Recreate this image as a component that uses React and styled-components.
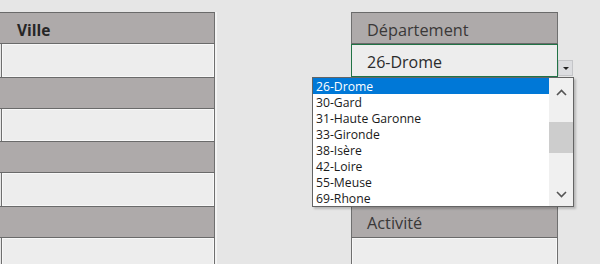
import React from "react";
import styled, { createGlobalStyle, css } from "styled-components";

const departements = [
  "26-Drome",
  "30-Gard",
  "31-Haute Garonne",
  "33-Gironde",
  "38-Isère",
  "42-Loire",
  "55-Meuse",
  "69-Rhone",
];

const leftRows = ["head", "body", "blank", "body", "blank", "body", "blank", "body"];

const App = () => {
  return (
    <>
      <GlobalStyle />
      <Sheet>
        <LeftTable>
          {leftRows.map((kind, i) => (
            <Cell key={i} $kind={kind} $edge>
              {i === 0 && <Bold>Ville</Bold>}
            </Cell>
          ))}
        </LeftTable>

        <RightTable>
          <Cell $kind="head">Département</Cell>
          <Cell $kind="body" $selected>
            26-Drome
          </Cell>
          <Cell $kind="blank" />
          <Cell $kind="body" />
          <Cell $kind="blank" />
          <Cell $kind="body" />
          <Cell $kind="head">Activité</Cell>
          <Cell $kind="body" />

          <DropButton>
            <Triangle />
          </DropButton>

          <ListBox>
            <Items>
              {departements.map((d, i) => (
                <Item key={d} $active={i === 0}>
                  {d}
                </Item>
              ))}
            </Items>
            <ScrollBar>
              <ArrowBox $h={28}>
                <Chevron up />
              </ArrowBox>
              <Track>
                <Thumb />
              </Track>
              <ArrowBox $h={24}>
                <Chevron />
              </ArrowBox>
            </ScrollBar>
          </ListBox>
        </RightTable>
      </Sheet>
    </>
  );
};

const Chevron = ({ up }) => (
  <svg width="11" height="7" viewBox="0 0 11 7">
    <path
      d={up ? "M1 6 L5.5 1.5 L10 6" : "M1 1 L5.5 5.5 L10 1"}
      fill="none"
      stroke="#555"
      strokeWidth="1.6"
    />
  </svg>
);

const GlobalStyle = createGlobalStyle`
  html, body {
    margin: 0;
    background: #e6e6e6;
    overflow: hidden;
  }
  body {
    font-family: "Open Sans", "Noto Sans", "Liberation Sans", sans-serif;
  }
`;

const Sheet = styled.div`
  display: flex;
  gap: 136px;
  width: 600px;
  height: 264px;
  padding-top: 12px;
  box-sizing: border-box;
  overflow: hidden;
`;

const LeftTable = styled.div`
  display: flex;
  flex-direction: column;
  width: 215px;
  flex: 0 0 215px;
  box-shadow: 2px 0 0 #f3f3f3;
`;

const RightTable = styled.div`
  position: relative;
  display: flex;
  flex-direction: column;
  width: 207px;
  flex: 0 0 207px;
`;

const Cell = styled.div`
  box-sizing: border-box;
  height: 32.3px;
  flex: 0 0 32.3px;
  display: flex;
  align-items: center;
  padding: 3px 0 0 15px;
  font-size: 16.3px;
  color: #3a3838;
  border-right: 1px solid #6f6f6f;
  border-left: 1px solid #6f6f6f;

  ${(p) =>
    (p.$kind === "head" || p.$kind === "blank") &&
    css`
      background: #aeaaaa;
      border-top: 1px solid #6a6a6a;
      border-bottom: 1px solid #6a6a6a;
    `}

  ${(p) =>
    p.$kind === "body" &&
    css`
      background: #ededed;
      box-shadow: inset 0 0 0 1px #f8f8f8;
      font-size: 16px;
      color: #2b2b2b;
    `}

  ${(p) =>
    p.$edge &&
    css`
      border-left: none;
      padding-left: 17px;
    `}

  ${(p) =>
    p.$edge &&
    p.$kind === "body" &&
    css`
      margin-left: 1px;
      border-left: 1px solid #6f6f6f;
    `}

  ${(p) =>
    p.$selected &&
    css`
      border: 1px solid #217346;
      box-shadow: none;
    `}
`;

const Bold = styled.span`
  font-weight: 700;
  font-size: 15.5px;
  color: #262626;
`;

const DropButton = styled.div`
  position: absolute;
  left: 207px;
  top: 48px;
  width: 15px;
  height: 16px;
  box-sizing: border-box;
  background: #dcdde0;
  border: 1px solid #c4c5c8;
  display: flex;
  align-items: center;
  justify-content: center;
`;

const Triangle = styled.div`
  width: 0;
  height: 0;
  border-left: 3px solid transparent;
  border-right: 3px solid transparent;
  border-top: 3px solid #222;
`;

const ListBox = styled.div`
  position: absolute;
  left: -39px;
  top: 65px;
  width: 262px;
  height: 130px;
  box-sizing: border-box;
  border: 1px solid #646464;
  background: #fff;
  display: flex;
  box-shadow: 2px 2px 2px rgba(0, 0, 0, 0.2);
`;

const Items = styled.div`
  flex: 1;
  display: flex;
  flex-direction: column;
`;

const Item = styled.div`
  height: 16px;
  line-height: 17px;
  padding-left: 3px;
  font-size: 12.2px;
  white-space: nowrap;
  color: ${(p) => (p.$active ? "#fff" : "#1a1a1a")};
  background: ${(p) => (p.$active ? "#0078d7" : "transparent")};
`;

const ScrollBar = styled.div`
  width: 24px;
  flex: 0 0 24px;
  background: #f0f0f0;
  display: flex;
  flex-direction: column;
`;

const ArrowBox = styled.div`
  height: ${(p) => p.$h}px;
  flex: 0 0 ${(p) => p.$h}px;
  display: flex;
  align-items: center;
  justify-content: center;
`;

const Track = styled.div`
  flex: 1;
  padding-top: 16px;
`;

const Thumb = styled.div`
  height: 31px;
  background: #cdcdcd;
`;

export default App;
